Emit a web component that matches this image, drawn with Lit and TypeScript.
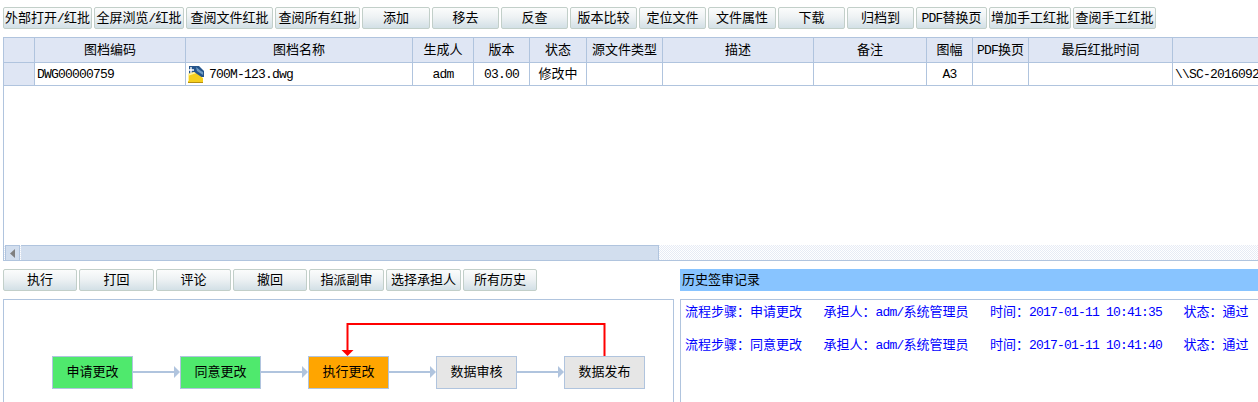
import { LitElement, html, css, svg } from "lit";
import { customElement } from "lit/decorators.js";

const topButtons = ["外部打开/红批","全屏浏览/红批","查阅文件红批","查阅所有红批","添加","移去","反查","版本比较","定位文件","文件属性","下载","归档到","PDF替换页","增加手工红批","查阅手工红批"];
const flowButtons = ["执行","打回","评论","撤回","指派副审","选择承担人","所有历史"];
const headers = ["","图档编码","图档名称","生成人","版本","状态","源文件类型","描述","备注","图幅","PDF换页","最后红批时间",""];
const row = ["","DWG00000759","700M-123.dwg","adm","03.00","修改中","","","","A3","","","\\\\SC-2016092"];
const nodes = [["申请更改","done"],["同意更改","done"],["执行更改","active"],["数据审核","todo"],["数据发布","todo"]];
const history = [
  ["流程步骤：申请更改","承担人：adm/系统管理员","时间：2017-01-11 10:41:35","状态：通过"],
  ["流程步骤：同意更改","承担人：adm/系统管理员","时间：2017-01-11 10:41:40","状态：通过"],
];

/* Latin runs are tightened so they take the 7px advance of the original UI font. */
const t = (s: string) =>
  s.split(/([\x20-\x7e]+)/).map((p, i) => (i % 2 ? html`<span class="l">${p}</span>` : p));

@customElement("app-root")
export class AppRoot extends LitElement {
  static styles = css`
    :host {
      display: block;
      width: 1258px;
      height: 402px;
      overflow: hidden;
      background: #fff;
      color: #000;
      font: 13px/1 "Liberation Mono", "Noto Sans CJK SC", monospace;
      padding-top: 7px;
      box-sizing: border-box;
    }
    .l { font-size: 13px; letter-spacing: -0.8px; white-space: pre; }
    .toolbar { display: grid; gap: 2px; height: 22px; margin-left: 3px; }
    .toolbar.top { grid-template-columns: 89px 90px 87px 85px 68px 67px 67px 67px 67px 68px 67px 67px 71px 82px 83px; }
    .toolbar.flow { grid-template-columns: 74px 75px 75px 74px 75px 75px 74px; margin-left: 0; }
    .btn {
      display: flex; align-items: center; justify-content: center;
      box-sizing: border-box; white-space: nowrap; overflow: hidden;
      border: 1px solid #c2cfc9; border-radius: 2px;
      background: linear-gradient(#fbfcfc, #eef2f4 45%, #d3e0e6);
      font: inherit; color: #000; padding: 0;
    }
    .grid-panel {
      margin: 8px 0 0 3px; height: 224px; box-sizing: border-box;
      border-left: 1px solid #b0c4de; border-top: 1px solid #b0c4de;
      border-bottom: 1px solid #b0c4de;
      display: flex; flex-direction: column;
    }
    .grid-body { flex: 1; overflow: hidden; }
    .tr {
      display: grid;
      grid-template-columns: 31px 151px 227px 61px 56px 57px 76px 151px 113px 46px 56px 144px 1fr;
      border-bottom: 1px solid #b0c4de;
      box-sizing: border-box;
    }
    .tr.head { height: 25px; background: #dfe6f4; }
    .tr.data { height: 23px; }
    .cell {
      display: flex; align-items: center; justify-content: center;
      box-sizing: border-box; border-right: 1px solid #b0c4de;
      white-space: nowrap; overflow: hidden; min-width: 0;
    }
    .cell:last-child { border-right: none; }
    .tr.data .cell:first-child { background: #dfe6f4; }
    .cell.left { justify-content: flex-start; padding-left: 2px; }
    .scrollbar {
      display: flex; height: 15px; flex: none;
      background-color: #fff;
      background-image: conic-gradient(#e6ebf5 25%, #fff 0 50%, #e6ebf5 0 75%, #fff 0);
      background-size: 2px 2px;
    }
    .sb-btn {
      width: 15px; margin-left: 1px; box-sizing: border-box; background: #d2deee;
      display: flex; align-items: center; justify-content: center;
      border: 1px solid #b0c4de; border-bottom: none;
    }
    .sb-thumb {
      width: 638px; margin-left: 1px; box-sizing: border-box; background: #d2deee;
      border-top: 1px solid #b0c4de; border-right: 1px solid #b0c4de;
    }
    .lower { display: grid; grid-template-columns: 671px 578px; column-gap: 6px; margin: 8px 0 0 3px; }
    .lower > div { min-width: 0; }
    .hist-title { height: 22px; background: #88c4ff; display: flex; align-items: center; padding-left: 2px; box-sizing: border-box; }
    .box {
      margin-top: 8px; height: 103px; box-sizing: border-box;
      border: 1px solid #b0c4de; border-bottom: none;
    }
    .box.flowbox {
      position: relative; display: flex; gap: 47px;
      padding: 56px 0 0 48px;
    }
    .box.histbox { border-right: none; padding: 6px 0 0 4px; color: #0000ff; }
    .node {
      width: 81px; height: 33px; box-sizing: border-box;
      border: 1px solid #b0c4de;
      display: flex; align-items: center; justify-content: center;
    }
    .node.done { background: #4fe96d; }
    .node.active { background: #ffa500; }
    .node.todo { background: #e6e6e6; }
    .overlay { position: absolute; left: 0; top: 0; width: 669px; height: 102px; pointer-events: none; }
    .hist-row { display: flex; gap: 21.5px; height: 33px; align-items: flex-start; line-height: 13px; white-space: nowrap; }
    .file-icon { flex: none; width: 16px; height: 17px; display: block; margin-right: 5px; }
  `;

  private connectors() {
    /* Coordinates are local to the flow box (page x - 4, page y - 300). */
    const arrows = [129, 257, 385, 513].map((x) => svg`
      <rect x=${x} y="71" width="43" height="2" fill="#b0c4de"></rect>
      <path d="M${x + 41} 66 L${x + 47} 72 L${x + 41} 78 Z" fill="#b0c4de"></path>`);
    return html`<svg class="overlay" viewBox="0 0 669 102">
      ${arrows}
      <path d="M600.5 56 V24 H343.5 V50" fill="none" stroke="#ff0000" stroke-width="2"></path>
      <path d="M337.5 50 H349.5 L343.5 56 Z" fill="#ff0000"></path>
    </svg>`;
  }

  private fileIcon() {
    return html`<svg class="file-icon" viewBox="0 0 16 17">
      <path d="M1 0 H11 L16 5 V11 H1 Z" fill="#24548c"></path>
      <path d="M8 1 L13 5 L15 6 V9 L9 5 Z" fill="#6f9cc4"></path>
      <path d="M3 1 V7 M0 4 H6" stroke="#ffffff" stroke-width="1.4"></path>
      <path d="M0 8 L6 6 L15 12 V16 H0 Z" fill="#f5cf1e"></path>
      <path d="M0 16 H15 V17 H0 Z" fill="#b58f10"></path>
      <path d="M0 8 L6 6 L8 7.3 L1 9.5 V15 H0 Z" fill="#fff2a0"></path>
    </svg>`;
  }

  render() {
    return html`
      <div class="toolbar top">
        ${topButtons.map((b) => html`<button class="btn">${t(b)}</button>`)}
      </div>
      <div class="grid-panel">
        <div class="grid-body">
          <div class="tr head">${headers.map((h) => html`<div class="cell">${t(h)}</div>`)}</div>
          <div class="tr data">
            ${row.map((c, i) => html`<div class="cell ${i === 1 || i === 2 || i === 12 ? "left" : ""}">
              ${i === 2 ? this.fileIcon() : ""}${t(c)}
            </div>`)}
          </div>
        </div>
        <div class="scrollbar">
          <div class="sb-btn"><svg width="6" height="9" viewBox="0 0 6 9"><path d="M5 0 V9 L0 4.5 Z" fill="#808080"></path></svg></div>
          <div class="sb-thumb"></div>
        </div>
      </div>
      <div class="lower">
        <div>
          <div class="toolbar flow">
            ${flowButtons.map((b) => html`<button class="btn">${b}</button>`)}
          </div>
          <div class="box flowbox">
            ${nodes.map(([n, s]) => html`<div class="node ${s}">${n}</div>`)}
            ${this.connectors()}
          </div>
        </div>
        <div>
          <div class="hist-title">历史签审记录</div>
          <div class="box histbox">
            ${history.map((r) => html`<div class="hist-row">${r.map((c) => html`<span>${t(c)}</span>`)}</div>`)}
          </div>
        </div>
      </div>
    `;
  }
}
